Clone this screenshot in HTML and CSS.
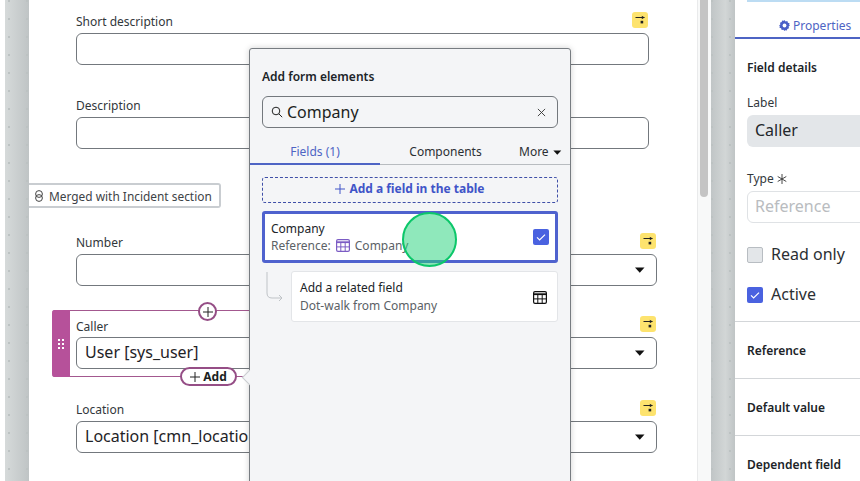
FILE: index.html
```html
<!DOCTYPE html>
<html lang="en">
<head>
<meta charset="utf-8">
<title>Form builder</title>
<link rel="stylesheet" href="styles.css">
</head>
<body>
<svg class="defs" width="0" height="0" aria-hidden="true">
  <symbol id="flag" viewBox="0 0 16 16">
    <path d="M3.5 5.5h9" fill="none" stroke="#222" stroke-width="1.1"/>
    <path d="M9.8 3.8l2.8 1.7-2.8 1.7z" fill="#222"/>
    <rect x="8.6" y="8.8" width="2.6" height="2.6" fill="#222"/>
  </symbol>
  <symbol id="caret" viewBox="0 0 10 6"><path d="M0 .5h9.5L4.75 5.7z" fill="#111"/></symbol>
  <symbol id="table" viewBox="0 0 14 13">
    <rect x=".6" y=".6" width="12.8" height="11.8" rx="1.4" fill="none" stroke="currentColor" stroke-width="1.2"/>
    <path d="M.6 3.2h12.8" stroke="currentColor" stroke-width="1.8"/>
    <path d="M.6 7.9h12.8M4.8 3v9.4M9.2 3v9.4" stroke="currentColor" stroke-width="1"/>
  </symbol>
  <symbol id="check" viewBox="0 0 16 16"><path d="M4 8.4l2.6 2.6L12 5.6" fill="none" stroke="#fff" stroke-width="1.2"/></symbol>
</svg>

<main class="page">
  <div class="edge"></div>
  <div class="gutter"></div>

  <section class="form">
    <div class="field narrow">
      <div class="label-row"><span>Short description</span><svg class="flag"><use href="#flag"/></svg></div>
      <div class="input"></div>
    </div>
    <div class="field narrow">
      <div class="label-row"><span>Description</span></div>
      <div class="input"></div>
    </div>
    <div class="merged">
      <svg class="link" viewBox="0 0 10 12" width="10" height="12"><circle cx="5" cy="4" r="3.4" fill="none" stroke="#444" stroke-width="1"/><circle cx="5" cy="8" r="3.4" fill="none" stroke="#444" stroke-width="1"/></svg>
      <span>Merged with Incident section</span>
    </div>
    <div class="field wide">
      <div class="label-row"><span>Number</span><svg class="flag"><use href="#flag"/></svg></div>
      <div class="input select"><svg class="caret"><use href="#caret"/></svg></div>
    </div>
    <div class="field wide caller">
      <div class="frame">
        <div class="handle">
          <svg viewBox="0 0 6 10" width="6" height="10"><g fill="#fff"><rect width="2" height="2"/><rect x="4" width="2" height="2"/><rect y="4" width="2" height="2"/><rect x="4" y="4" width="2" height="2"/><rect y="8" width="2" height="2"/><rect x="4" y="8" width="2" height="2"/></g></svg>
        </div>
      </div>
      <div class="label-row"><span>Caller</span><svg class="flag"><use href="#flag"/></svg></div>
      <div class="input select"><span>User [sys_user]</span><svg class="caret"><use href="#caret"/></svg></div>
      <div class="plus-dot"><svg viewBox="0 0 10 10" width="10" height="10"><path d="M5 0v10M0 5h10" stroke="#222" stroke-width="1"/></svg></div>
      <div class="add-pill"><svg viewBox="0 0 10 10" width="10" height="10"><path d="M5 0v10M0 5h10" stroke="#222" stroke-width="1"/></svg><b>Add</b></div>
    </div>
    <div class="field wide">
      <div class="label-row"><span>Location</span><svg class="flag"><use href="#flag"/></svg></div>
      <div class="input select"><span>Location [cmn_location]</span><svg class="caret"><use href="#caret"/></svg></div>
    </div>
  </section>

  <div class="scrolltrack"><div class="thumb"></div></div>
  <div class="gutter right"></div>

  <aside class="props">
    <div class="props-top"></div>
    <div class="props-tab">
      <svg viewBox="0 0 12 12" width="11" height="11"><path d="M6 0l1.2 1.5 1.9-.4.6 1.8 1.8.6-.4 1.9L12 6l-1.5 1.2.4 1.9-1.8.6-.6 1.8-1.9-.4L6 12l-1.2-1.5-1.9.4-.6-1.8-1.8-.6.4-1.9L0 6l1.5-1.2-.4-1.9 1.8-.6.6-1.8 1.9.4z" fill="#4a5fc7"/><circle cx="6" cy="6" r="2.1" fill="#fff"/></svg>
      <span>Properties</span>
    </div>
    <div class="props-body">
      <h3>Field details</h3>
      <div class="p-label">Label</div>
      <div class="p-input filled">Caller</div>
      <div class="p-label type">Type <svg class="req" viewBox="0 0 10 10" width="10" height="10"><path d="M5 0v10M.7 2.5l8.6 5M9.3 2.5l-8.6 5" stroke="#333" stroke-width=".9"/></svg></div>
      <div class="p-input disabled">Reference</div>
      <div class="check-row"><span class="box"></span><span>Read only</span></div>
      <div class="check-row"><svg class="box on"><use href="#check"/></svg><span>Active</span></div>
    </div>
    <div class="acc">Reference</div>
    <div class="acc">Default value</div>
    <div class="acc">Dependent field</div>
  </aside>

  <div class="popup">
    <div class="tail"></div>
    <div class="popup-inner">
      <h2>Add form elements</h2>
      <div class="search">
        <svg viewBox="0 0 12 12" width="12" height="12"><circle cx="5" cy="5" r="3.8" fill="none" stroke="#222" stroke-width="1"/><path d="M7.8 7.8l3.4 3.4" stroke="#222" stroke-width="1"/></svg>
        <span class="q">Company</span>
        <svg class="x" viewBox="0 0 10 10" width="9" height="9"><path d="M1 1l8 8M9 1l-8 8" stroke="#333" stroke-width="1"/></svg>
      </div>
      <div class="tabs">
        <div class="tab active">Fields (1)</div>
        <div class="tab">Components</div>
        <div class="tab more">More <svg class="caret small"><use href="#caret"/></svg></div>
      </div>
      <div class="list">
        <div class="add-field"><svg viewBox="0 0 10 10" width="10" height="10"><path d="M5 0v10M0 5h10" stroke="#4054c8" stroke-width="1"/></svg><b>Add a field in the table</b></div>
        <div class="card selected">
          <div>
            <div class="c-title">Company</div>
            <div class="c-sub">Reference: <svg class="tbl purple"><use href="#table"/></svg> Company</div>
          </div>
          <svg class="box on"><use href="#check"/></svg>
        </div>
        <div class="related-row">
          <svg class="elbow" viewBox="0 0 17 30" width="17" height="30"><path d="M1 0v21q0 5 5 5h10M13 23l3 3-3 3" fill="none" stroke="#bfc3c7" stroke-width="1"/></svg>
          <div class="card related">
            <div>
              <div class="c-title">Add a related field</div>
              <div class="c-sub">Dot-walk from Company</div>
            </div>
            <svg class="tbl black"><use href="#table"/></svg>
          </div>
        </div>
      </div>
    </div>
  </div>

  <div class="click-dot"></div>
</main>
</body>
</html>
```

FILE: styles.css
```css
* { box-sizing: border-box; }
html, body { margin: 0; height: 100%; overflow: hidden; }
body { font-family: "Noto Sans", "Open Sans", sans-serif; color: #2b2f33; background: #fff; }
.defs { position: absolute; }

.page {
  position: relative;
  display: grid;
  grid-template-columns: 5px 24px 668px 14px 24px 125px;
  width: 860px;
  height: 481px;
  overflow: hidden;
}
.edge { background: #fff; }
.gutter {
  background:
    radial-gradient(circle at 4px 4px, #bcc2c2 1px, transparent 1.3px) 0 -3px / 18px 18px,
    linear-gradient(90deg, #d6dada, #bfc4c5);
}
.gutter.right {
  background:
    radial-gradient(circle at 4px 4px, #bcc2c2 1px, transparent 1.3px) -3px -3px / 18px 18px,
    linear-gradient(90deg, #c0c5c6, #d2d6d6 60%, #bfc4c5);
}

/* form canvas */
.form { background: #fff; padding: 12px 0 0 47px; overflow: hidden; }
.field { position: relative; margin-bottom: 31px; }
.field.narrow { width: 573px; }
.field.wide { width: 581px; }
.label-row {
  display: flex; justify-content: space-between; align-items: center;
  height: 16px; margin-bottom: 5px; padding-right: 1px;
  font-size: 12px; line-height: 16px; color: #32373b;
}
.label-row span { padding-top: 3px; }
.caller .label-row span { padding-top: 5px; }
.flag { width: 16px; height: 16px; background: #fde36e; border-radius: 3px; }
.input {
  display: flex; align-items: center; justify-content: space-between;
  height: 32px; padding: 0 11px 2px 8px;
  border: 1px solid #73787d; border-radius: 6px;
  font-size: 16px; color: #1f2327; background: #fff;
}
.select { justify-content: flex-end; }
.select span { margin-right: auto; }
.caret { width: 10px; height: 6px; flex: none; margin-top: 2px; }
.caret.small { width: 9px; height: 5px; }

.merged {
  display: flex; align-items: center; gap: 5px;
  width: 192px; height: 25px; margin: 34px 0 25px -47px; padding-left: 5px;
  border: 2px solid #c9cdd1; border-left: 0; border-radius: 0 3px 3px 0;
  font-size: 11.9px; color: #3d4246; background: #fff;
}
.link { flex: none; }

.caller { margin-bottom: 23px; padding: 6px 0 8px; }
.field + .caller { margin-top: -7px; }
.frame {
  position: absolute; left: -24px; top: 0; bottom: 0; width: 500px;
  border-top: 1px solid #a3588f; border-bottom: 1px solid #a3588f;
  border-radius: 3px 0 0 3px;
}
.handle {
  position: absolute; left: 0; top: -1px; bottom: -1px; width: 18px;
  display: flex; align-items: center; justify-content: center;
  background: #b6519a; border-radius: 3px 0 0 3px;
}
.caller .label-row, .caller .input { position: relative; }
.plus-dot {
  position: absolute; left: 122px; top: -8px; width: 19px; height: 19px;
  display: flex; align-items: center; justify-content: center;
  background: #fff; border: 2px solid #954e86; border-radius: 50%;
}
.add-pill {
  position: absolute; left: 104px; top: 57px; width: 57px; height: 19px;
  display: flex; align-items: center; justify-content: center; gap: 3px;
  background: #fff; border: 2px solid #954e86; border-radius: 10px;
  font-size: 12px; color: #1c1f22;
}
.add-pill b { font-weight: 700; }

/* scrollbar */
.scrolltrack { background: #f8f9f9; border-left: 1px solid #e9eaeb; padding: 0 3px 0 2px; }
.thumb { width: 8px; height: 197px; background: #c4c4c4; border-radius: 0 0 4px 4px; }

/* properties panel */
.props { background: #fff; overflow: hidden; }
.props-top { height: 2px; margin-left: 12px; background: #bcdcf3; }
.props-tab {
  display: flex; align-items: center; gap: 3px;
  height: 37px; padding: 12px 0 0 44px; border-bottom: 2px solid #4e64c4;
  font-size: 12px; color: #4e64c4; white-space: nowrap;
}
.props-body { width: 200px; padding: 20px 0 0 12px; height: 283px; border-bottom: 1px solid #d3d6d9; }
.props h3 { margin: 0 0 19px; font-size: 12px; line-height: 17px; font-weight: 600; color: #202428; }
.p-label { height: 16px; margin-bottom: 4px; font-size: 12px; line-height: 16px; color: #32373b; }
.p-label.type { margin-top: 24px; display: flex; align-items: center; gap: 3px; }
.req { flex: none; }
.p-input {
  height: 32px; padding: 0 7px; line-height: 28px; font-size: 16px;
  border: 1px solid transparent; border-radius: 6px;
}
.filled { background: #e3e6e9; color: #23272b; }
.disabled { border-color: #dfe2e5; color: #b9bcc0; margin-bottom: 24px; }
.box { width: 16px; height: 16px; flex: none; background: #e3e6e9; border: 1px solid #b8bdc2; border-radius: 2px; }
.box.on { background: #4a62e0; border: 0; }
.check-row { display: flex; align-items: center; gap: 8px; height: 16px; margin-bottom: 24px; line-height: 14px; font-size: 16px; color: #2b2f33; white-space: nowrap; }
.check-row span:last-child { padding-bottom: 2px; }
.acc {
  width: 200px; height: 57px; padding: 20px 0 0 12px;
  font-size: 12px; line-height: 17px; font-weight: 600; color: #202428;
  border-bottom: 1px solid #d3d6d9;
}

/* add elements popover */
.popup {
  position: absolute; left: 249px; top: 48px; width: 322px; height: 440px;
  background: #f4f5f7; border: 1px solid #777c81; border-radius: 3px 3px 0 0;
  box-shadow: 0 0 6px rgba(0,0,0,.18);
}
.tail {
  position: absolute; left: -6px; top: 323px; width: 11px; height: 11px;
  background: #f4f5f7; border-left: 1px solid #c9cccf; border-bottom: 1px solid #c9cccf;
  transform: rotate(45deg);
}
.popup-inner { position: relative; }
.popup h2 { margin: 0; padding: 19px 12px 0; height: 47px; font-size: 12px; line-height: 17px; font-weight: 600; color: #202428; }
.search {
  display: flex; align-items: center; margin: 0 12px; height: 32px; padding: 0 11px 0 8px;
  border: 1px solid #73787d; border-radius: 6px; background: #f4f5f7;
}
.q { margin-left: 4px; font-size: 16px; color: #1c1f22; }
.x { margin-left: auto; }
.tabs {
  display: grid; grid-template-columns: 130px 131px 59px; height: 37px;
  border-bottom: 1px solid #b8bcc0; font-size: 12px; color: #2b2f33;
}
.tab { display: flex; align-items: center; justify-content: center; gap: 4px; padding-top: 11px; }
.tab.active { color: #4e64c4; border-bottom: 2px solid #4e64c4; margin-bottom: -1px; }
.tab.more { padding: 10px 0 0 8px; justify-content: flex-start; white-space: nowrap; }
.list { padding: 12px 12px 0; display: flex; flex-direction: column; gap: 8px; }
.add-field {
  display: flex; align-items: center; justify-content: center; gap: 4px; height: 26px; padding-bottom: 3px;
  border: 1px dashed #3f4fa8; border-radius: 3px;
  font-size: 12px; color: #4054c8;
}
.card {
  display: flex; align-items: center; justify-content: space-between;
  background: #fff; border-radius: 3px;
}
.selected { height: 52px; padding: 0 6px; border: 3px solid #4f62ce; }
.c-title { font-size: 12px; line-height: 16px; color: #202428; }
.c-sub { display: flex; align-items: center; gap: 5px; font-size: 12px; line-height: 17px; color: #5b6166; white-space: nowrap; }
.tbl { width: 14px; height: 13px; flex: none; }
.purple { color: #7b5cc4; }
.black { color: #111; }
.related-row { display: flex; align-items: flex-start; gap: 8px; padding-left: 4px; }
.elbow { flex: none; margin-top: 1px; }
.related { flex: 1; height: 51px; padding: 1px 10px 0 8px; border: 1px solid #e3e5e8; }
.related .c-title { margin-bottom: 1px; }

.click-dot {
  position: absolute; left: 402px; top: 212px; width: 55px; height: 55px;
  border: 2px solid #0cc76a; border-radius: 50%; background: rgba(40, 210, 125, .52);
}
```
